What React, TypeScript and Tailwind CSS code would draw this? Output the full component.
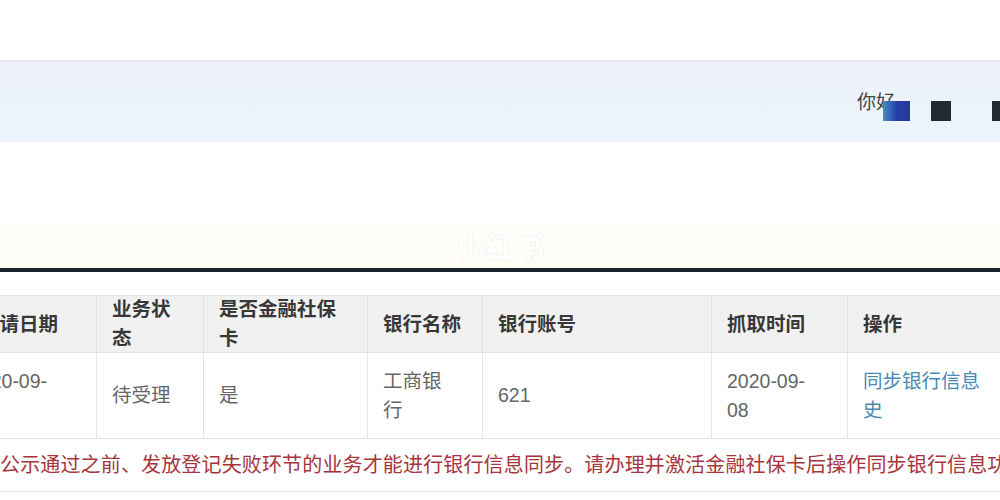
const cols = [
  { w: "w-[132px]", head: "申请日期", body: "max-w-[90px]", pad: "pl-[4px] pr-[15px]" },
  { w: "w-[107px]", head: "业务状态", body: "max-w-[72px]", pad: "px-[15px]" },
  { w: "w-[164px]", head: "是否金融社保卡", body: "max-w-[125px]", pad: "px-[15px]" },
  { w: "w-[115px]", head: "银行名称", body: "max-w-[70px]", pad: "px-[15px]" },
  { w: "w-[229px]", head: "银行账号", body: "max-w-[190px]", pad: "px-[15px]" },
  { w: "w-[136px]", head: "抓取时间", body: "max-w-[90px]", pad: "px-[15px]" },
  { w: "w-[160px]", head: "操作", body: "max-w-[125px]", pad: "px-[15px]" },
];

const heads = ["max-w-[95px]", "max-w-[70px]", "max-w-[125px]", "max-w-[85px]", "max-w-[190px]", "max-w-[95px]", "max-w-[125px]"];

const row = ["2020-09-08", "待受理", "是", "工商银行", "621", "2020-09-08", "同步银行信息史"];

export default function App() {
  return (
    <div className="w-[1000px] h-[500px] overflow-hidden bg-white text-[#333] font-['Liberation_Sans','Noto_Sans_CJK_SC',sans-serif]">
      <div className="h-[60px] bg-white" />
      <div className="h-[82px] border-t-2 border-[#e6e8eb] bg-gradient-to-b from-[#edf2f8] to-[#ebf3fc] flex items-center justify-end pt-[6px]">
        <span className="text-[19px] text-[#444] mb-[4px]">你好</span>
        <div className="flex items-center -ml-[12px] mt-[12px]">
          <div className="w-[27px] h-[20px] bg-gradient-to-r from-[#4a8ac8] via-[#263fa5] to-[#26359c]" />
          <div className="w-[20px] h-[20px] bg-[#212b33] ml-[21px]" />
          <div className="w-[20px] h-[20px] bg-[#212b33] ml-[41px] -mr-[12px]" />
        </div>
      </div>
      <div className="h-[126px] bg-gradient-to-b from-white via-white to-[#fffdf5] flex items-end justify-center">
        <span className="text-[30px] font-bold text-white -mb-[2px] [text-shadow:0_0_2px_#e6e6e6]">小红书</span>
      </div>
      <div className="h-[4px] bg-[#1c252c]" />
      <div className="h-[23px]" />
      <div className="-ml-[35px] w-[1100px] text-[19.5px] leading-[29px]">
        <div className="flex h-[58px] bg-[#f1f1f1] font-bold text-[#383838] border-y border-[#e4e4e4]">
          {cols.map((c, i) => (
            <div key={i} className={`${c.w} shrink-0 border-r border-[#e2e2e2] px-[15px] flex items-center`}>
              <span className={heads[i]}>{c.head}</span>
            </div>
          ))}
        </div>
        <div className="flex h-[86px] bg-white text-[#666] border-b border-[#e4e4e4]">
          {row.map((v, i) => (
            <div key={i} className={`${cols[i].w} ${cols[i].pad} shrink-0 border-r border-[#e4e4e4] flex items-center`}>
              <span className={`${cols[i].body} ${i === 6 ? "text-[#4a8bb3]" : ""}`}>{v}</span>
            </div>
          ))}
        </div>
        <div className="h-[53px] border-b border-[#e4e4e4] flex items-center pl-[35px] whitespace-nowrap text-[20px] tracking-[0.15px] text-[#a8343c]">
          公示通过之前、发放登记失败环节的业务才能进行银行信息同步。请办理并激活金融社保卡后操作同步银行信息功能。
        </div>
      </div>
    </div>
  );
}
